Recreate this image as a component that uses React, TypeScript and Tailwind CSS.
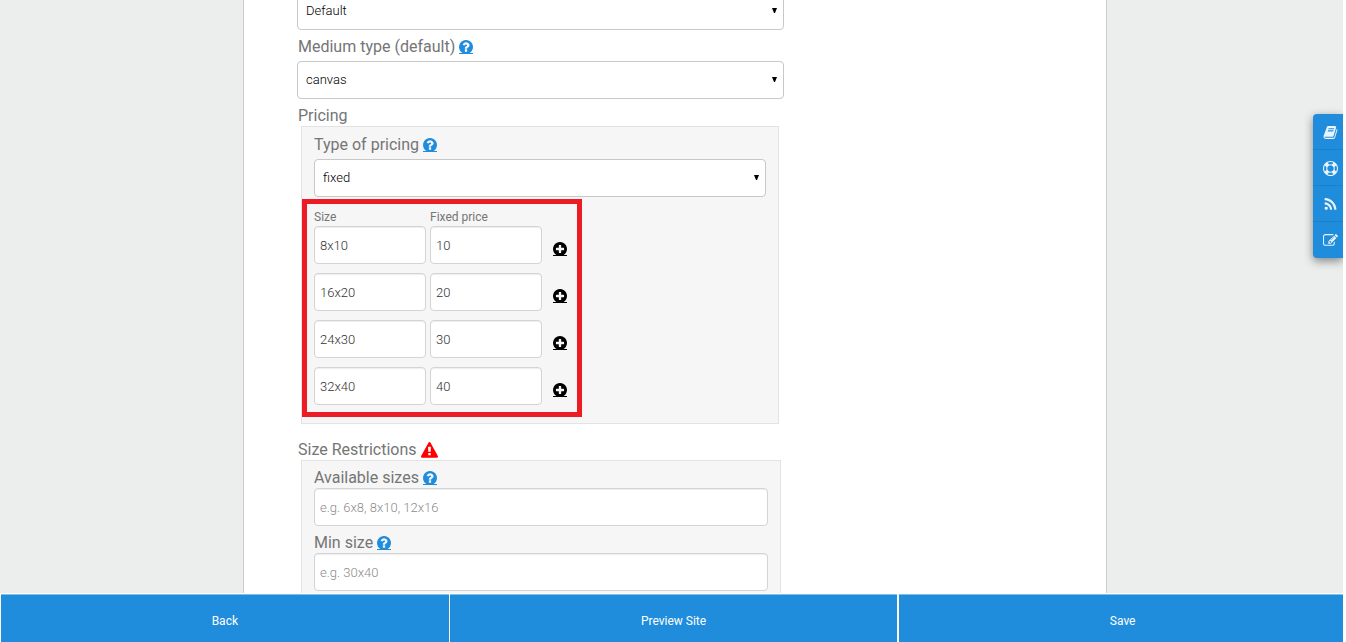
import type { ReactNode } from 'react';

const icons = {
  question:
    'M1024 1376v-192q0-14-9-23t-23-9h-192q-14 0-23 9t-9 23v192q0 14 9 23t23 9h192q14 0 23-9t9-23zm256-672q0-88-55.500-163t-138.500-116-170-41q-243 0-371 213-15 24 8 42l132 100q7 6 19 6 16 0 25-12 53-68 86-92 34-24 86-24 48 0 85.500 26t37.500 59q0 38-20 61t-68 45q-63 28-115.500 86.500t-52.500 125.500v36q0 14 9 23t23 9h192q14 0 23-9t9-23q0-19 21.500-49.500t54.500-49.500q32-18 49-28.500t46-35 44.500-48 28-60.500 12.500-81zm384 192q0 209-103 385.500t-279.500 279.500-385.500 103-385.500-103-279.500-279.500-103-385.500 103-385.500 279.500-279.500 385.500-103 385.500 103 279.500 279.500 103 385.500z',
  plus:
    'M1344 960v-128q0-26-19-45t-45-19h-256v-256q0-26-19-45t-45-19h-128q-26 0-45 19t-19 45v256h-256q-26 0-45 19t-19 45v128q0 26 19 45t45 19h256v256q0 26 19 45t45 19h128q26 0 45-19t19-45v-256h256q26 0 45-19t19-45zm320-64q0 209-103 385.500t-279.500 279.500-385.500 103-385.500-103-279.500-279.500-103-385.500 103-385.500 279.500-279.500 385.500-103 385.500 103 279.500 279.500 103 385.500z',
  warning:
    'M1024 1375v-190q0-14-9.500-23.500t-22.500-9.500h-192q-13 0-22.500 9.500t-9.500 23.500v190q0 14 9.500 23.500t22.500 9.500h192q13 0 22.500-9.500t9.500-23.500zm-2-374l18-459q0-12-10-19-13-11-24-11h-220q-11 0-24 11-10 7-10 21l17 457q0 10 10 16.500t24 6.500h185q14 0 23.500-6.500t10.500-16.500zm-14-934l768 1408q35 63-2 126-17 29-46.500 46t-63.500 17h-1536q-34 0-63.500-17t-46.500-46q-37-63-2-126l768-1408q17-31 47-49t65-18 65 18 47 49z',
  book:
    'M1703 478q40 57 18 129l-275 906q-19 64-76.500 107.500t-122.500 43.500h-923q-77 0-148.500-53.500t-99.500-131.500q-24-67-2-127 0-4 3-27t4-37q1-8-3-21.500t-3-19.500q2-11 8-21t16.500-23.500 16.500-23.500q23-38 45-91.500t30-91.500q3-10 .5-30t-.5-28q3-11 17-28t17-23q21-36 42-92t25-90q1-9-2.500-32t.5-28q4-13 22-30.500t22-22.500q19-26 42.500-84.500t27.500-96.500q1-8-3-25.500t-2-26.500q2-8 9-18t18-23 17-21q8-12 16.500-30.500t15-35 16-36 19.500-32 26.500-23.500 36-11.500 47.500 5.500l-1 3q38-9 51-9h761q74 0 114 56t18 130l-274 906q-36 119-71.500 153.500t-128.500 34.500h-869q-27 0-38 15-11 16-1 43 24 70 144 70h923q29 0 56-15.500t35-41.500l300-987q7-22 5-57 38 15 59 43zm-1064 2q-4 13 2 22.500t20 9.500h608q13 0 25.500-9.500t16.500-22.500l21-64q4-13-2-22.500t-20-9.500h-608q-13 0-25.500 9.500t-16.500 22.500zm-83 256q-4 13 2 22.500t20 9.500h608q13 0 25.500-9.500t16.500-22.500l21-64q4-13-2-22.500t-20-9.500h-608q-13 0-25.500 9.500t-16.500 22.500z',
  support:
    'M896 0q182 0 348 71t286 191 191 286 71 348-71 348-191 286-286 191-348 71-348-71-286-191-191-286-71-348 71-348 191-286 286-191 348-71zm0 128q-190 0-361 90l194 194q82-28 167-28t167 28l194-194q-171-90-361-90zm-678 1129l194-194q-28-82-28-167t28-167l-194-194q-90 171-90 361t90 361zm678 407q190 0 361-90l-194-194q-82 28-167 28t-167-28l-194 194q171 90 361 90zm0-384q159 0 271.500-112.500t112.500-271.500-112.500-271.500-271.500-112.500-271.500 112.500-112.500 271.500 112.500 271.500 271.500 112.500zm484-217l194 194q90-171 90-361t-90-361l-194 194q28 82 28 167t-28 167z',
  rss:
    'M576 1344q0 80-56 136t-136 56-136-56-56-136 56-136 136-56 136 56 56 136zm512 123q2 28-17 48-18 21-47 21h-135q-25 0-43-16.500t-20-41.500q-22-229-184.500-391.500t-391.500-184.500q-25-2-41.500-20t-16.500-43v-135q0-29 21-47 17-17 43-17h5q160 13 306 80.500t259 181.500q114 113 181.500 259t80.500 306zm512 2q2 27-18 47-18 20-46 20h-143q-26 0-44.500-17.500t-19.500-42.500q-12-215-101-408.500t-231.500-336-336-231.500-408.500-102q-25-1-42.500-19.500t-17.500-43.500v-143q0-28 20-46 18-18 44-18h3q262 13 501.500 120t425.500 294q187 186 294 425.500t120 501.500z',
  edit:
    'M888 1184l116-116-152-152-116 116v56h96v96h56zm440-720q-16-16-33 1l-350 350q-17 17-1 33t33-1l350-350q17-17 1-33zm80 594v190q0 119-84.500 203.500t-203.500 84.500h-832q-119 0-203.500-84.500t-84.500-203.500v-832q0-119 84.500-203.500t203.500-84.500h832q63 0 117 25 15 7 18 23 3 17-9 29l-49 49q-14 14-32 8-23-6-45-6h-832q-66 0-113 47t-47 113v832q0 66 47 113t113 47h832q66 0 113-47t47-113v-126q0-13 9-22l64-64q15-15 35-7t20 29zm-96-738l288 288-672 672h-288v-288zm444 132l-92 92-288-288 92-92q28-28 68-28t68 28l152 152q28 28 28 68t-28 68z',
};

type IconProps = {
  name: keyof typeof icons;
  viewBox?: string;
  className?: string;
};

const Icon = ({ name, viewBox = '0 0 1792 1792', className }: IconProps) => (
  <svg viewBox={viewBox} fill="currentColor" aria-hidden="true" className={className}>
    <path d={icons[name]} />
  </svg>
);

// round icons sit right on their underline
const RoundIcon = ({ name }: { name: 'question' | 'plus' }) => (
  <Icon name={name} viewBox="128 128 1536 1536" className="-mb-px size-[14px]" />
);

const Help = ({ topic }: { topic: string }) => (
  <a href="#help" aria-label={`Help: ${topic}`} className="border-b border-[#1f8ddc] text-[#1f8ddc]">
    <RoundIcon name="question" />
  </a>
);

type FieldProps = {
  id: string;
  label: string;
  labelClassName?: string;
  children: ReactNode;
};

const Field = ({ id, label, labelClassName = '', children }: FieldProps) => (
  <div>
    <div className={`flex h-[27px] items-end ${labelClassName}`}>
      <div className="flex items-center gap-1 leading-5">
        <label htmlFor={id}>{label}</label>
        <Help topic={label} />
      </div>
    </div>
    {children}
  </div>
);

const Select = ({ id, value, label }: { id: string; value: string; label?: string }) => (
  <div className="relative text-[13px] font-light text-black">
    <select
      id={id}
      aria-label={label}
      className="block h-[38px] w-full appearance-none rounded border border-[#c8c8c8] bg-white px-2"
    >
      <option>{value}</option>
    </select>
    <svg viewBox="0 0 5 5" className="pointer-events-none absolute top-4 right-[7px] size-[5px]">
      <path d="M0 0h5L3 5H2z" />
    </svg>
  </div>
);

const inputStyle =
  'block h-[38px] w-full rounded border border-[#d4d4d4] bg-white px-[5px] text-[13px] font-light text-[#333] shadow-[inset_0_1px_1px_rgba(0,0,0,0.07)] placeholder:text-[#8c8c8c]';

const prices = [
  { size: '8x10', price: '10' },
  { size: '16x20', price: '20' },
  { size: '24x30', price: '30' },
  { size: '32x40', price: '40' },
];

const PriceTable = () => (
  <table className="block w-[280px] border-5 border-[#ed1c24] px-[7px] pt-1 pb-[7px]">
    <thead className="text-xs">
      <tr className="grid h-[18px] grid-cols-[112px_112px_1fr] items-center gap-1 text-left">
        <th className="font-normal">Size</th>
        <th className="font-normal">Fixed price</th>
      </tr>
    </thead>
    <tbody className="grid gap-[9px]">
      {prices.map(({ size, price }) => (
        <tr key={size} className="grid grid-cols-[112px_112px_1fr] gap-1">
          <td>
            <input aria-label="Size" defaultValue={size} className={inputStyle} />
          </td>
          <td>
            <input aria-label="Fixed price" defaultValue={price} className={inputStyle} />
          </td>
          <td className="flex items-center pt-2 pl-[7px]">
            <button aria-label="Add size" className="border-b border-black text-black">
              <RoundIcon name="plus" />
            </button>
          </td>
        </tr>
      ))}
    </tbody>
  </table>
);

const links = [
  { icon: 'book', label: 'Documentation' },
  { icon: 'support', label: 'Support' },
  { icon: 'rss', label: 'Blog' },
  { icon: 'edit', label: 'Feedback' },
] as const;

const SideLinks = () => (
  <nav className="fixed top-[114px] right-[3px] w-[30px] divide-y divide-[#1a80cb] rounded-l-sm bg-[#1f8ddc] text-white/90 shadow-[0_3px_10px_rgba(0,0,0,0.45)]">
    {links.map(({ icon, label }) => (
      <a key={icon} href={`#${icon}`} aria-label={label} className="flex h-9 items-center justify-center pt-px pl-[5px]">
        <Icon name={icon} className="size-[15px]" />
      </a>
    ))}
  </nav>
);

const BottomBar = () => (
  <footer className="fixed inset-x-0 bottom-0 grid h-[49px] grid-cols-3 gap-px border-t border-white bg-white pl-px text-xs text-white">
    {['Back', 'Preview Site', 'Save'].map((action) => (
      <button key={action} className="border-t border-[#7fbfea] bg-[#1f8ddc] pt-1 last:border-l last:border-l-white">
        {action}
      </button>
    ))}
  </footer>
);

export default function App() {
  return (
    <div className="h-screen overflow-hidden bg-[#eceeee] pl-1 font-[Roboto,sans-serif] text-[#757575]">
      <main className="mx-auto h-full max-w-[864px] border-x border-[#cccccc] bg-white px-[53px]">
        <div className="-mt-2 max-w-[487px]">
          <Select id="frame" value="Default" label="Frame" />
          <div className="pt-1">
            <Field id="medium" label="Medium type (default)" labelClassName="pb-1 pl-px">
              <Select id="medium" value="canvas" />
            </Field>
          </div>

          <h2 className="flex h-[27px] items-end pl-px leading-5">Pricing</h2>
          <section className="mr-[5px] ml-1 border border-[#e3e3e3] bg-[#f6f6f6] pt-[5px] pb-[6px]">
            <div className="px-3">
              <Field id="pricing" label="Type of pricing" labelClassName="pb-1">
                <Select id="pricing" value="fixed" />
              </Field>
            </div>
            <div className="pt-[2px]">
              <PriceTable />
            </div>
          </section>

          <h2 className="mt-3 flex h-6 items-end gap-1 pl-px leading-5">
            Size Restrictions
            <Icon name="warning" className="mb-px size-[17px] text-[#ff0000]" />
          </h2>
          <section className="mr-[3px] ml-1 border border-[#e3e3e3] bg-[#f6f6f6] px-3 pb-3">
            <Field id="sizes" label="Available sizes">
              <input id="sizes" placeholder="e.g. 6x8, 8x10, 12x16" className={inputStyle} />
            </Field>
            <Field id="min" label="Min size">
              <input id="min" placeholder="e.g. 30x40" className={inputStyle} />
            </Field>
          </section>
        </div>
      </main>
      <SideLinks />
      <BottomBar />
      <div className="fixed inset-y-0 right-0 w-[3px] bg-white" />
    </div>
  );
}
